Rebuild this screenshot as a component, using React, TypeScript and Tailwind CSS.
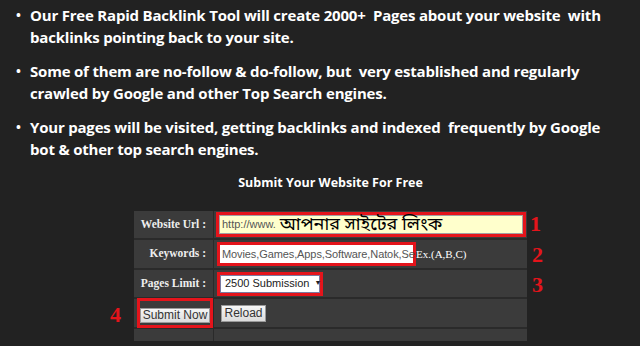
import React from 'react';

const bullets = [
    'Our Free Rapid Backlink Tool will create 2000+\u00a0 Pages about your website\u00a0 with backlinks pointing back to your site.',
    'Some of them are no-follow & do-follow, but\u00a0 very established and regularly crawled by Google and other Top Search engines.',
    'Your pages will be visited, getting backlinks and indexed\u00a0 frequently by Google bot & other top search engines.',
];

const serif = { fontFamily: '"Liberation Serif", "DejaVu Serif", serif' };
const arial = { fontFamily: '"Liberation Sans", Arial, sans-serif' };

const Mark = ({ n }: { n: string }) => (
    <span className="text-[22px] font-bold text-[#e4141b] leading-none" style={serif}>{n}</span>
);

export default function App() {
    return (
        <div className="w-[640px] h-[346px] bg-[#222222] overflow-hidden" style={{ fontFamily: '"Open Sans", "DejaVu Sans", sans-serif' }}>
            {/* feature list */}
            <ul className="pt-[4px] pl-[16px] pr-[20px] text-white font-bold text-[15px] leading-[22px] tracking-[-0.2px]">
                {bullets.map((b, i) => (
                    <li key={i} className="flex mb-[12px]">
                        <span className="w-[14px] shrink-0 text-[13px]">•</span>
                        <span>{b}</span>
                    </li>
                ))}
            </ul>

            <div className="w-[393px] ml-[134px] mt-[1px]">
                <h2 className="text-center text-white font-bold text-[12.5px] leading-[18px] h-[39px] pt-[2px]">Submit Your Website For Free</h2>

                {/* form table */}
                <div className="relative bg-[#3b3b3b] grid grid-cols-[80px_1fr] text-[#eeeeee]">
                    {/* row 1 */}
                    <div className="h-[29px] flex items-center justify-end pr-[7px] border-r border-[#2a2a2a] border-b-2 text-[11.5px] font-bold" style={serif}>Website Url :</div>
                    <div className="h-[29px] flex items-center pl-[2px] border-b-2 border-[#2a2a2a]">
                        <div className="border-[3px] border-[#e4141b] w-[310px] h-[25px] p-0">
                            <div className="w-full h-full bg-[#ffffcc] border border-[#a0a0a0] flex items-center pl-[2px] text-black">
                                <span className="text-[11px] text-[#555]" style={arial}>http://www.</span>
                                <span className="ml-[4px] text-[18px] leading-[20px]" style={{ fontFamily: '"Noto Sans Bengali", "Noto Sans", sans-serif' }}>আপনার সাইটের লিংক</span>
                            </div>
                        </div>
                    </div>
                    {/* row 2 */}
                    <div className="h-[30px] flex items-center justify-end pr-[7px] border-r border-[#2a2a2a] border-b-2 text-[11.5px] font-bold" style={serif}>Keywords :</div>
                    <div className="h-[30px] flex items-center pl-[3px] border-b-2 border-[#2a2a2a]">
                        <div className="border-[3px] border-[#e4141b] w-[199px] h-[24px]">
                            <div className="w-full h-full bg-white flex items-center pl-[2px] whitespace-nowrap text-[11px] text-[#555] tracking-[-0.1px]" style={arial}>Movies,Games,Apps,Software,Natok,Se</div>
                        </div>
                        <span className="text-[11px] text-white" style={serif}>Ex.(A,B,C)</span>
                    </div>
                    {/* row 3 */}
                    <div className="h-[29px] flex items-center justify-end pr-[7px] border-r border-[#2a2a2a] border-b-2 text-[11.5px] font-bold" style={serif}>Pages Limit :</div>
                    <div className="h-[29px] flex items-center pl-[3px] border-b-2 border-[#2a2a2a]">
                        <div className="border-[3px] border-[#e4141b] w-[106px] h-[24px]">
                            <div className="w-full h-full bg-white border border-[#7a7aa0] flex items-center pl-[4px] gap-[5px] whitespace-nowrap text-[11px] text-[#222]" style={arial}>
                                2500 Submission <span className="text-[7px]">▼</span>
                            </div>
                        </div>
                    </div>
                    {/* row 4 */}
                    <div className="h-[30px] flex items-center pl-[3px] border-r border-[#2a2a2a] border-b-2">
                        <div className="border-[3px] border-[#e4141b]">
                            <button className="h-[15px] w-[70px] bg-gradient-to-b from-[#f6f6f6] to-[#dcdcdc] border border-[#9a9a9a] text-[12px] leading-none text-[#333]" style={arial}>Submit Now</button>
                        </div>
                    </div>
                    <div className="h-[30px] flex items-center pl-[7px] border-b-2 border-[#2a2a2a]">
                        <button className="h-[17px] w-[45px] bg-gradient-to-b from-[#f6f6f6] to-[#dcdcdc] border border-[#9a9a9a] text-[12px] leading-none text-[#333]" style={arial}>Reload</button>
                    </div>
                    {/* row 5 */}
                    <div className="h-[12px] border-r border-[#2a2a2a]"></div>
                    <div className="h-[12px]"></div>

                    {/* annotation numbers */}
                    <div className="absolute left-[396px] top-[2px]"><Mark n="1" /></div>
                    <div className="absolute left-[398px] top-[33px]"><Mark n="2" /></div>
                    <div className="absolute left-[398px] top-[63px]"><Mark n="3" /></div>
                    <div className="absolute left-[-24px] top-[93px]"><Mark n="4" /></div>
                </div>
            </div>
        </div>
    );
}
